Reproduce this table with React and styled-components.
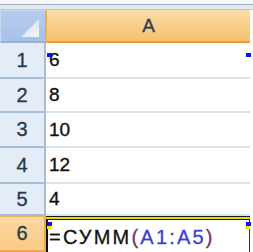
import React from 'react';
import styled, { createGlobalStyle } from 'styled-components';

const GlobalStyle = createGlobalStyle`
    html, body {
        margin: 0;
        padding: 0;
        background: #ffffff;
    }
    body {
        font-family: "Liberation Sans", Arial, sans-serif;
        width: 253px;
        height: 252px;
        overflow: hidden;
    }
`;

const rows = [
    { n: 1, v: '6', h: 36 },
    { n: 2, v: '8', h: 34 },
    { n: 3, v: '10', h: 35 },
    { n: 4, v: '12', h: 36 },
    { n: 5, v: '4', h: 32 },
];

function App() {
    return (
        <>
            <GlobalStyle />
            <Sheet>
                <TopStrip />
                <Grid>
                    <Corner>
                        <svg width="44" height="30" viewBox="0 0 44 30">
                            <defs>
                                <linearGradient id="tri" x1="0" y1="0" x2="1" y2="1">
                                    <stop offset="0" stopColor="#c9daf0" />
                                    <stop offset="1" stopColor="#f4f8fd" />
                                </linearGradient>
                            </defs>
                            <polygon points="38,8 38,26 20,26" fill="url(#tri)" />
                        </svg>
                    </Corner>
                    <ColHeader>A</ColHeader>

                    {rows.map((r) => (
                        <React.Fragment key={r.n}>
                            <RowHeader $h={r.h}>{r.n}</RowHeader>
                            <Cell $h={r.h}>{r.v}</Cell>
                        </React.Fragment>
                    ))}

                    <RowHeader $h={36} $active>6</RowHeader>
                    <EditCell>
                        =СУММ<Paren>(</Paren><Ref>A1:A5</Ref><Paren>)</Paren>
                    </EditCell>

                    <Handle style={{ left: 47, top: 43 }} />
                    <Handle style={{ left: 246, top: 43 }} />
                    <Handle style={{ left: 47, top: 212 }} />
                    <Handle style={{ left: 246, top: 212 }} />
                    <Handle $yellow style={{ left: 47, top: 216, width: 4, height: 3 }} />
                    <Handle $yellow style={{ left: 246, top: 216, width: 4, height: 3 }} />
                </Grid>
            </Sheet>
        </>
    );
}

export default App;

const Sheet = styled.div`
    width: 253px;
    height: 252px;
    display: flex;
    flex-direction: column;
    overflow: hidden;
`;

const TopStrip = styled.div`
    height: 10px;
    flex: none;
    background: linear-gradient(
        to bottom,
        #f5f7fa 0px,
        #f5f7fa 4px,
        #9eadc0 4px,
        #9eadc0 5px,
        #e4eaf2 5px,
        #e4eaf2 9px,
        #b7c6d8 9px
    );
`;

const Grid = styled.div`
    position: relative;
    display: grid;
    grid-template-columns: 46px 204px 3px;
    grid-template-rows: 33px;
    grid-auto-rows: auto;
`;

const Corner = styled.div`
    height: 33px;
    box-sizing: border-box;
    background: linear-gradient(to bottom, #b5cdee, #a6c1e8);
    border: 1px solid #c8d8ee;
    border-right: 1px solid #9db5d2;
    border-bottom: 2px solid #9ab2d0;
    display: flex;
    align-items: flex-start;
    justify-content: flex-start;
    overflow: hidden;

    svg {
        display: block;
    }
`;

const ColHeader = styled.div`
    grid-column: 2;
    height: 33px;
    box-sizing: border-box;
    background: linear-gradient(to bottom, #fbdca6 0%, #f9d08e 45%, #f5c26c 100%);
    border-bottom: 2px solid #f2983a;
    border-left: 1px solid #f3b24e;
    color: #2a3d52;
    font-size: 19px;
    -webkit-text-stroke: 0.3px #2a3d52;
    display: flex;
    align-items: center;
    justify-content: center;
    padding-top: 1px;
`;

const RowHeader = styled.div`
    grid-column: 1;
    height: ${(p) => p.$h}px;
    box-sizing: border-box;
    background: ${(p) => (p.$active ? 'linear-gradient(to bottom, #fbd8a2, #f9c986)' : '#e4ecf7')};
    border-right: 2px solid ${(p) => (p.$active ? '#f2a54a' : '#a6bdd7')};
    border-bottom: 2px solid ${(p) => (p.$active ? '#f2a54a' : '#a9bfd8')};
    border-top: ${(p) => (p.$active ? '1px solid #f0b060' : '0')};
    color: #25384e;
    -webkit-text-stroke: 0.3px #25384e;
    font-size: 20px;
    display: flex;
    align-items: center;
    justify-content: center;
`;

const Cell = styled.div`
    grid-column: 2;
    height: ${(p) => p.$h}px;
    box-sizing: border-box;
    border-bottom: 2px solid #dbe2ec;
    color: #111;
    -webkit-text-stroke: 0.35px #111;
    font-size: 19px;
    display: flex;
    align-items: center;
    padding-left: 3px;
`;

const EditCell = styled.div`
    grid-column: 2;
    height: 36px;
    box-sizing: border-box;
    border-left: 2px solid #111;
    border-right: 1px solid #333;
    position: relative;
    color: #111;
    -webkit-text-stroke: 0.3px currentColor;
    font-size: 20px;
    letter-spacing: 2.2px;
    display: flex;
    align-items: center;
    padding-left: 1px;
    padding-top: 6px;

    &::before {
        content: '';
        position: absolute;
        left: -2px;
        right: -1px;
        top: 0;
        height: 4px;
        background: linear-gradient(
            to bottom,
            #1a1a1a 0px,
            #1a1a1a 1px,
            #e6df00 1px,
            #e6df00 3px,
            #1a1a1a 3px
        );
    }
`;

const Paren = styled.span`
    color: #6a3a6e;
`;

const Ref = styled.span`
    color: #3b3fd0;
`;

const Handle = styled.div`
    position: absolute;
    width: 5px;
    height: 4px;
    background: ${(p) => (p.$yellow ? '#f2ec00' : '#1010f0')};
`;
